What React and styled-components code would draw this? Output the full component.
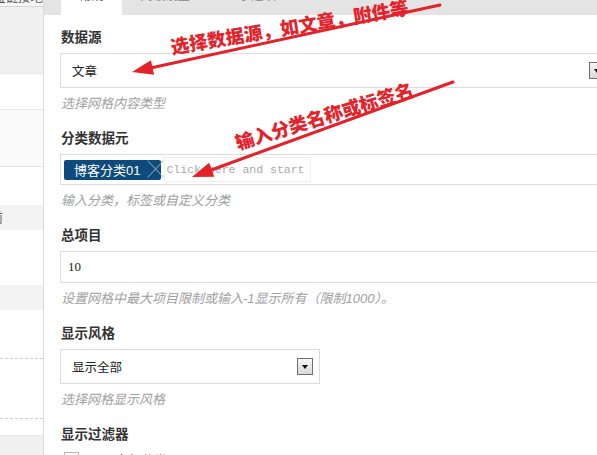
import React from "react";
import styled, { createGlobalStyle } from "styled-components";

const GlobalStyle = createGlobalStyle`
	body {
		margin: 0;
		overflow: hidden;
		background: #fff;
		font-family: "Liberation Sans", "Noto Sans CJK SC", sans-serif;
	}
`;

const Page = styled.div`
	position: relative;
	display: flex;
	width: 597px;
	height: 455px;
	overflow: hidden;
	background: #fff;
`;

const Sidebar = styled.div`
	width: 43px;
	flex-shrink: 0;
	display: flex;
	flex-direction: column;
	border-right: 1px solid #dadada;
`;

const SideHead = styled.div`
	height: 14px;
	display: flex;
	justify-content: flex-end;
	align-items: flex-end;
	overflow: hidden;
	background: #f6f6f6;
	border-bottom: 1px solid #d6d6d6;
	color: #555;
	font-size: 12.5px;
	white-space: nowrap;
	line-height: 16px;
`;

const SideRow = styled.div`
	height: ${(p) => p.$h}px;
	flex-shrink: 0;
	box-sizing: border-box;
	background: ${(p) => p.$bg || "#fff"};
	border-top: ${(p) => (p.$line ? "1px solid #e8e8e8" : "none")};
	border-bottom: ${(p) => (p.$dashed ? "1px dashed #cfcfcf" : "none")};
	overflow: hidden;
	color: #666;
	font-size: 13px;
	line-height: ${(p) => p.$h}px;
	white-space: nowrap;
	text-indent: -10px;
`;

const Main = styled.div`
	flex: 1;
	min-width: 0;
	display: flex;
	flex-direction: column;
`;

const TabBar = styled.div`
	height: 15px;
	flex-shrink: 0;
	display: flex;
	padding-left: 17px;
	background: #e4e4e4;
	overflow: hidden;
`;

const Tab = styled.div`
	padding: 0 18px;
	background: ${(p) => (p.$active ? "#fff" : "transparent")};
	color: ${(p) => (p.$active ? "#555" : "#888")};
	font-size: 12.5px;
	line-height: 14px;
	margin-top: -11px;
	height: 26px;
	white-space: nowrap;
`;

const Form = styled.div`
	padding: 13px 0 0 16px;
`;

const Field = styled.div`
	margin-bottom: 15px;
`;

const Label = styled.div`
	font-size: 13.5px;
	font-weight: bold;
	color: #333;
	line-height: 20px;
	margin-bottom: 5px;
	padding-left: 1px;
`;

const Desc = styled.div`
	margin-top: 6px;
	font-size: 13px;
	font-style: italic;
	color: #a0a0a0;
	line-height: 20px;
	padding-left: 1px;
	white-space: nowrap;
`;

const Select = styled.div`
	box-sizing: border-box;
	width: ${(p) => p.$w}px;
	height: 35px;
	display: flex;
	align-items: center;
	padding-left: 11px;
	padding-right: ${(p) => p.$pr}px;
	border: 1px solid #dcdcdc;
	font-size: 12.5px;
	color: #222;
`;

const DropBtn = styled.div`
	width: 16px;
	height: 17px;
	box-sizing: border-box;
	margin-left: auto;
	flex-shrink: 0;
	border: 1px solid #6e6e6e;
	background: linear-gradient(#f8f8f8, #d8d8d8);
	display: flex;
	align-items: center;
	justify-content: center;
	&::after {
		content: "";
		border-left: 3.5px solid transparent;
		border-right: 3.5px solid transparent;
		border-top: 4px solid #111;
		margin-top: 1px;
	}
`;

const TagBox = styled.div`
	box-sizing: border-box;
	width: 553px;
	height: 31px;
	display: flex;
	align-items: center;
	gap: 3px;
	padding: 0 3px;
	border: 1px solid #dcdcdc;
`;

const Tag = styled.div`
	height: 20px;
	display: flex;
	align-items: center;
	padding: 0 2px 0 10px;
	background: #0e4a7c;
	border-radius: 2px;
	color: #fff;
	font-size: 13px;
	white-space: nowrap;
`;

const TagClose = styled.span`
	margin-left: 7px;
	color: #9db3c8;
	font-size: 16px;
	line-height: 20px;
	width: 12px;
	text-align: center;
`;

const TagInput = styled.div`
	box-sizing: border-box;
	width: 147px;
	height: 25px;
	display: flex;
	align-items: center;
	padding-left: 1px;
	border: 1px solid #efefef;
	color: #a8a8a8;
	font-family: "Liberation Mono", monospace;
	font-size: 11.5px;
	white-space: nowrap;
`;

const TextInput = styled.div`
	box-sizing: border-box;
	width: 553px;
	height: 32px;
	display: flex;
	align-items: center;
	padding-left: 7px;
	border: 1px solid #dcdcdc;
	font-family: "Liberation Serif", serif;
	font-size: 13px;
	color: #222;
`;

const CheckRow = styled.div`
	display: flex;
	align-items: center;
	gap: 10px;
	margin: 2px 0 0 4px;
	font-size: 13px;
	color: #444;
`;

const Checkbox = styled.span`
	width: 15px;
	height: 15px;
	box-sizing: border-box;
	border: 1px solid #b5b5b5;
	background: linear-gradient(#fff, #ececec);
`;

const Overlay = styled.svg`
	position: absolute;
	top: 0;
	left: 0;
	pointer-events: none;
`;

const RED = "#e5212a";

function Arrow({ from, to, len = 21, half = 7.5 }) {
	const dx = to[0] - from[0];
	const dy = to[1] - from[1];
	const d = Math.hypot(dx, dy);
	const ux = dx / d;
	const uy = dy / d;
	const bx = to[0] - ux * len;
	const by = to[1] - uy * len;
	const pts = [
		[to[0], to[1]],
		[bx - uy * half, by + ux * half],
		[bx + uy * half, by - ux * half],
	]
		.map((p) => p.join(","))
		.join(" ");
	return (
		<g>
			<line x1={from[0]} y1={from[1]} x2={bx + ux * 2} y2={by + uy * 2} stroke={RED} strokeWidth="3" strokeLinecap="round" />
			<polygon points={pts} fill={RED} />
		</g>
	);
}

function Annotations() {
	const font = { fontFamily: '"Noto Sans CJK SC", sans-serif', fontWeight: 900, fill: RED };
	return (
		<Overlay width="597" height="455" viewBox="0 0 597 455">
			<Arrow from={[440, 5]} to={[132, 72]} />
			<Arrow from={[453, 82]} to={[192, 177]} />
			<text x="172" y="54" fontSize="18.5" transform="rotate(-9.5 172 54)" style={font}>
				选择数据源，如文章，附件等
			</text>
			<text x="238" y="150" fontSize="18.5" transform="rotate(-17 238 150)" style={font}>
				输入分类名称或标签名
			</text>
		</Overlay>
	);
}

export default function App() {
	return (
		<>
			<GlobalStyle />
			<Page>
				<Sidebar>
					<SideHead>短链接地</SideHead>
					<SideRow $h={66} $bg="#f0f0f0" />
					<SideRow $h={36} $line />
					<SideRow $h={57} $bg="#fafafa" $line />
					<SideRow $h={39} $line />
					<SideRow $h={25} $bg="#f3f3f3">前</SideRow>
					<SideRow $h={55} />
					<SideRow $h={25} $bg="#f3f3f3" />
					<SideRow $h={49} $dashed />
					<SideRow $h={60} $dashed />
					<SideRow $h={16} />
					<SideRow $h={20} $bg="#f0f0f0" $line />
				</Sidebar>
				<Main>
					<TabBar>
						<Tab $active>常规</Tab>
						<Tab>高级设置</Tab>
						<Tab>显示选项</Tab>
					</TabBar>
					<Form>
						<Field>
							<Label>数据源</Label>
							<Select $w={553} $pr={7}>
								文章
								<DropBtn />
							</Select>
							<Desc>选择网格内容类型</Desc>
						</Field>
						<Field>
							<Label>分类数据元</Label>
							<TagBox>
								<Tag>
									博客分类01
									<TagClose>╳</TagClose>
								</Tag>
								<TagInput>Click here and start</TagInput>
							</TagBox>
							<Desc>输入分类，标签或自定义分类</Desc>
						</Field>
						<Field>
							<Label>总项目</Label>
							<TextInput>10</TextInput>
							<Desc>设置网格中最大项目限制或输入-1显示所有（限制1000）。</Desc>
						</Field>
						<Field>
							<Label>显示风格</Label>
							<Select $w={260} $pr={6}>
								显示全部
								<DropBtn />
							</Select>
							<Desc>选择网格显示风格</Desc>
						</Field>
						<Field>
							<Label>显示过滤器</Label>
							<CheckRow>
								<Checkbox />
								显示全部分类
							</CheckRow>
						</Field>
					</Form>
				</Main>
				<Annotations />
			</Page>
		</>
	);
}
